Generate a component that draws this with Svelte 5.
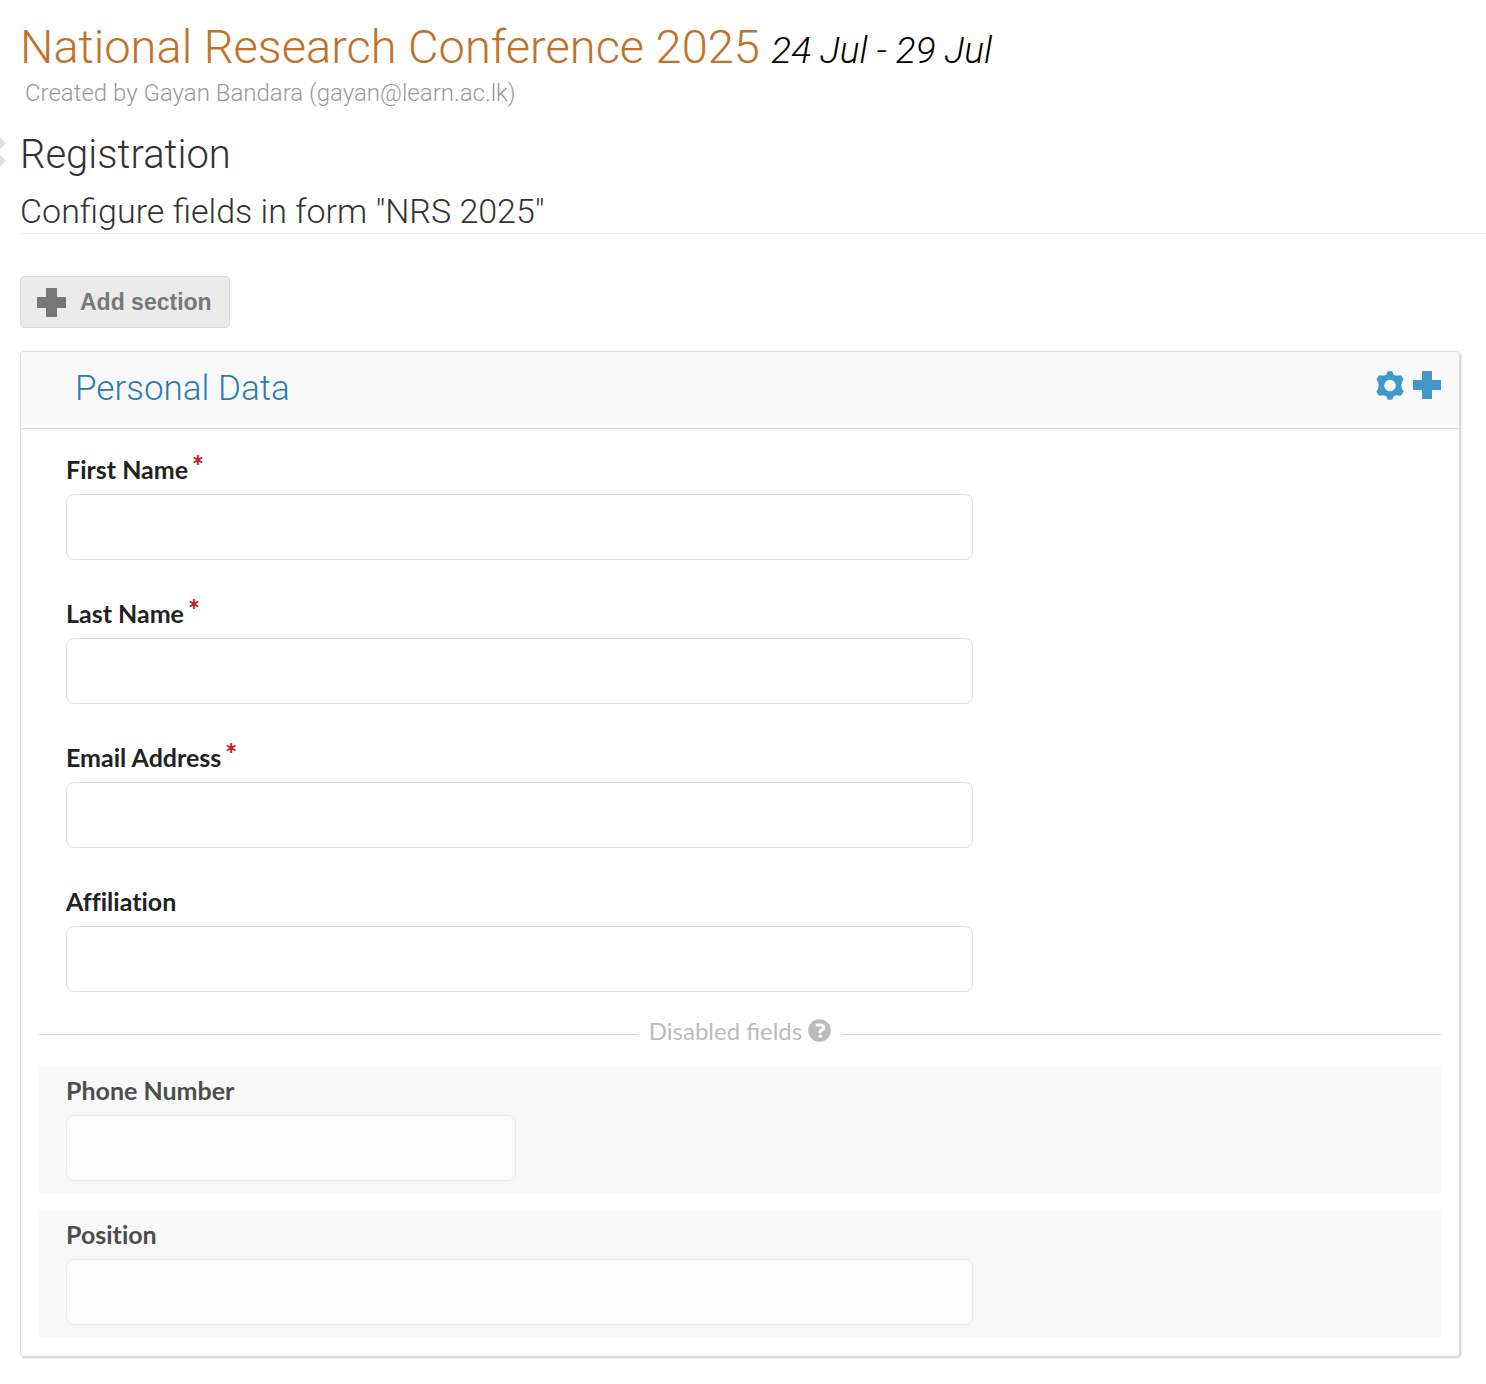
<script>
  const fields = [
    { id: 'first-name', label: 'First Name', required: true },
    { id: 'last-name', label: 'Last Name', required: true },
    { id: 'email', label: 'Email Address', required: true },
    { id: 'affiliation', label: 'Affiliation', required: false }
  ];
  const disabledFields = [
    { id: 'phone', label: 'Phone Number', short: true },
    { id: 'position', label: 'Position', short: false }
  ];
</script>

<main>
  <header>
    <h1><a href="#event">National Research Conference 2025</a> <em>24 Jul - 29 Jul</em></h1>
    <p class="author">Created by Gayan Bandara (gayan@learn.ac.lk)</p>
  </header>

  <div class="heading">
    <a class="back" href="#back" aria-label="Back">
      <svg width="6" height="28" viewBox="0 0 6 28"><path d="M0 0h1L6 5.500 0 11.500zM0 16.500 6 22.500 1 28H0z" fill="#dfdfdf" /></svg>
    </a>
    <h2>Registration</h2>
  </div>
  <h3>Configure fields in form "NRS 2025"</h3>

  <div class="content">
    <button class="add" type="button">
      <svg width="29" height="29" viewBox="0 0 29 29" aria-hidden="true"><path d="M9 0h11v9h9v11h-9v9H9v-9H0V9h9z" fill="#777" /></svg>
      Add section
    </button>

    <section class="card">
      <div class="card-head">
        <h4>Personal Data</h4>
        <div class="tools">
          <button type="button" aria-label="Section settings">
            <svg width="28" height="29" viewBox="0 0 28 29"><path fill="#4198c9" fill-rule="evenodd" d="M11.800.3h4.400l1.400 3.200q2.700 2 5.600.8l2.100.2 2.300 4.100-1.300 2q-1.900 3.900 0 7.800l1.300 2-2.300 4.100-2.100.2q-2.900-1.200-5.600.8l-1.400 3.200h-4.400l-1.400-3.200q-2.700-2-5.600-.8l-2.100-.2-2.300-4.100 1.300-2q1.900-3.900 0-7.800l-1.300-2 2.300-4.100 2.100-.2q2.900 1.200 5.600-.8zM14 8.700a5.800 5.800 0 1 0 0 11.600 5.800 5.800 0 0 0 0-11.600z" /></svg>
          </button>
          <button type="button" aria-label="Add field">
            <svg width="28" height="28" viewBox="0 0 28 28"><path d="M9 0h10v9h9v10h-9v9H9v-9H0V9h9z" fill="#4198c9" /></svg>
          </button>
        </div>
      </div>

      <div class="card-body">
        <div class="fields">
          {#each fields as field (field.id)}
            <div class="field">
              <label for={field.id}>{field.label}{#if field.required}<span class="required">*</span>{/if}</label>
              <input id={field.id} type="text" required={field.required} />
            </div>
          {/each}
        </div>

        <div class="divider">
          <span>Disabled fields</span>
          <svg width="23" height="23" viewBox="0 0 23 23" aria-hidden="true"><circle cx="11.500" cy="11.500" r="11.300" fill="#bbb" /><path d="M7.600 5.900h6.200l1.600 1.500v2.800l-3.200 1.800v2.200" fill="none" stroke="#fff" stroke-width="3" /><path d="M10.600 15.700h3.300v3h-3.300z" fill="#fff" /></svg>
        </div>

        <div class="fields">
          {#each disabledFields as field (field.id)}
            <div class="field off">
              <label for={field.id}>{field.label}</label>
              <input id={field.id} type="text" class:short={field.short} disabled />
            </div>
          {/each}
        </div>
      </div>
    </section>
  </div>
</main>

<style>
  :global(body) {
    margin: 0;
    background: #fff;
  }
  main {
    padding: 17px 0 26px 20px;
    font-family: Lato, sans-serif;
    color: #222;
  }
  h1, h2, h3, h4, p {
    margin: 0;
    font-family: Roboto, sans-serif;
    font-weight: 300;
  }
  h1 {
    font-size: 47px;
    line-height: 60px;
    color: #000;
  }
  h1 a {
    color: #c0722a;
    text-decoration: none;
  }
  h1 em {
    font-size: 37px;
    line-height: 1;
  }
  .author {
    padding-left: 5px;
    font-size: 24px;
    line-height: 32px;
    color: #999;
  }
  .heading {
    display: flex;
    align-items: center;
    margin: 22px 0 0 -20px;
    gap: 14px;
  }
  .back {
    display: flex;
    padding-bottom: 6px;
  }
  h2 {
    font-size: 40px;
    line-height: 48px;
    color: #333;
  }
  h3 {
    margin-top: 12px;
    padding-bottom: 2px;
    font-size: 34px;
    line-height: 40px;
    color: #333;
    border-bottom: 1px solid #eaeaea;
  }
  h1, h2, h3 {
    font-weight: 350;
  }
  h1 em {
    font-weight: 300;
  }
  .content {
    padding: 42px 26px 0 0;
  }
  button {
    display: flex;
    align-items: center;
    padding: 0;
    border: 0;
    background: none;
    cursor: pointer;
  }
  .add {
    gap: 14px;
    height: 52px;
    padding: 1px 17px 0 16px;
    border: 1px solid #ddd;
    border-radius: 4px;
    background: #ebebeb;
    color: #777;
    font: bold 23px "Liberation Sans", sans-serif;
  }
  .card {
    margin-top: 23px;
    border: 1px solid #ddd;
    border-radius: 4px;
    box-shadow: 1px 1px 2px 0 #ccc;
  }
  .card-head {
    display: flex;
    justify-content: space-between;
    padding: 16px 18px 18px 54px;
    border-bottom: 1px solid #ddd;
    border-radius: 3px 3px 0 0;
    background: #f9f9f9;
  }
  h4 {
    font-size: 35px;
    line-height: 42px;
    color: #2a7cad;
  }
  .tools {
    display: flex;
    align-items: center;
    align-self: flex-start;
    gap: 9px;
    height: 34px;
  }
  .card-body {
    padding: 17px 18px 19px;
  }
  .fields {
    display: grid;
    gap: 18px;
  }
  .field {
    padding: 8px 27px 12px;
  }
  .field.off {
    background: #f9f9f9;
  }
  label {
    display: block;
    margin-bottom: 10px;
    font-size: 25px;
    font-weight: 700;
    line-height: 30px;
    font-variant-ligatures: none;
  }
  .required {
    margin-left: 4px;
    color: #c1221a;
    font-size: 28px;
    font-weight: 900;
    line-height: 0;
    vertical-align: 3px;
  }
  input {
    display: block;
    box-sizing: border-box;
    width: 100%;
    max-width: 907px;
    height: 66px;
    padding: 0 16px;
    border: 1px solid #ddd;
    border-radius: 8px;
    background: #fff;
    font: 24px Lato, sans-serif;
  }
  .off label {
    color: #4d4d4d;
  }
  .off input {
    border-color: #ebebeb;
    background: #fcfcfc;
  }
  input.short {
    max-width: 450px;
  }
  .divider {
    display: flex;
    align-items: center;
    gap: 6px;
    height: 54px;
    margin-bottom: 9px;
    color: #bbb;
    font-size: 24px;
    line-height: 30px;
  }
  .divider svg {
    margin-bottom: 2px;
  }
  .divider::before, .divider::after {
    content: "";
    flex: 1;
    height: 1px;
    margin: 6px 5px 0 0;
    background: #ddd;
  }
  .divider::after {
    margin: 6px 0 0 5px;
  }
</style>
